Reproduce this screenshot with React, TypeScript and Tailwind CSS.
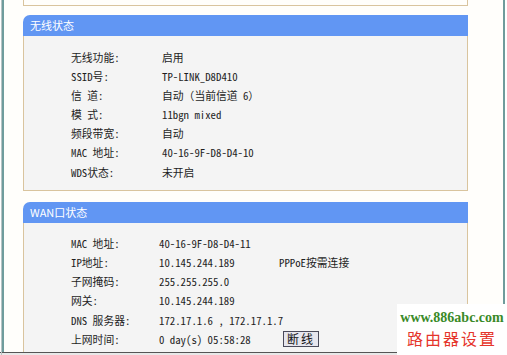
const mono = "font-['Noto_Sans_Mono_CJK_SC','Liberation_Mono','Noto_Sans_CJK_SC',monospace]";

type Row = { label: string; value: string; extra?: React.ReactNode };

const wireless: Row[] = [
  { label: "无线功能:", value: "启用" },
  { label: "SSID号:", value: "TP-LINK_D8D410" },
  { label: "信 道:", value: "自动（当前信道 6）" },
  { label: "模 式:", value: "11bgn mixed" },
  { label: "频段带宽:", value: "自动" },
  { label: "MAC 地址:", value: "40-16-9F-D8-D4-10" },
  { label: "WDS状态:", value: "未开启" },
];

const wan: Row[] = [
  { label: "MAC 地址:", value: "40-16-9F-D8-D4-11" },
  { label: "IP地址:", value: "10.145.244.189", extra: <span>PPPoE按需连接</span> },
  { label: "子网掩码:", value: "255.255.255.0" },
  { label: "网关:", value: "10.145.244.189" },
  { label: "DNS 服务器:", value: "172.17.1.6 , 172.17.1.7" },
  {
    label: "上网时间:",
    value: "0 day(s) 05:58:28",
    extra: (
      <button className="ml-[4px] h-[16px] w-[36px] border border-[#4a4a5a] bg-[#e6e6ee] text-[12px] leading-[14px] text-[#111] tracking-[2px]">
        断线
      </button>
    ),
  },
];

function Panel({ title, rows, labelW, pt, last }: { title: string; rows: Row[]; labelW: string; pt: string; last?: boolean }) {
  return (
    <div className="flex shrink-0 flex-col">
      <div className="h-[21px] shrink-0 rounded-tl-[7px] bg-[#6196f3] pl-[7px] text-[11px] leading-[21px] text-white font-['Noto_Sans_CJK_SC',sans-serif]">
        {title}
      </div>
      <div className={`border-x border-[#d9c49e] bg-[#f4f4f4] pl-[47px] ${pt} ${last ? "pb-[20px]" : "border-b pb-[9px]"}`}>
        {rows.map((r, i) => (
          <div key={i} className="flex h-[19.2px] items-center">
            <span className={`${labelW} shrink-0 whitespace-pre`}>{r.label}</span>
            <span className="w-[120px] shrink-0 whitespace-pre">{r.value}</span>
            {r.extra}
          </div>
        ))}
      </div>
    </div>
  );
}

export default function App() {
  return (
    <div className={`relative h-[355px] w-[507px] overflow-hidden bg-white text-[10.8px] text-[#1e1e1e] ${mono}`}>
      <div className="absolute inset-y-0 left-[1px] w-px bg-[#b8c4c4]" />
      <div className="mx-[2px] h-[352px] overflow-hidden border-x-2 border-[#6f9c9c] bg-[#fffefb]">
        <div className="ml-[19px] mr-[35px] h-[6px] border-x border-b border-[#d9c49e]" />
        <div className="ml-[19px] mr-[35px] mt-[9px] flex flex-col gap-[11px]">
          <Panel title="无线状态" rows={wireless} labelW="w-[91px]" pt="pt-[11px]" />
          <Panel title="WAN口状态" rows={wan} labelW="w-[88px]" pt="pt-[10px]" last />
        </div>
      </div>
      <div className="h-px bg-[#555]" />
      <div className="h-[2px] bg-[#e8e8e8]" />
      <div className="absolute bottom-0 right-0 flex h-[51px] w-[110px] flex-col items-center bg-white pt-[5px]">
        <span className="font-['Liberation_Serif',serif] text-[14px] font-bold leading-[18px] text-[#3a8a28]">www.886abc.com</span>
        <span className="font-['Noto_Sans_CJK_SC',sans-serif] text-[16px] leading-[22px] tracking-[2px] text-[#e5352b]">路由器设置</span>
      </div>
    </div>
  );
}
